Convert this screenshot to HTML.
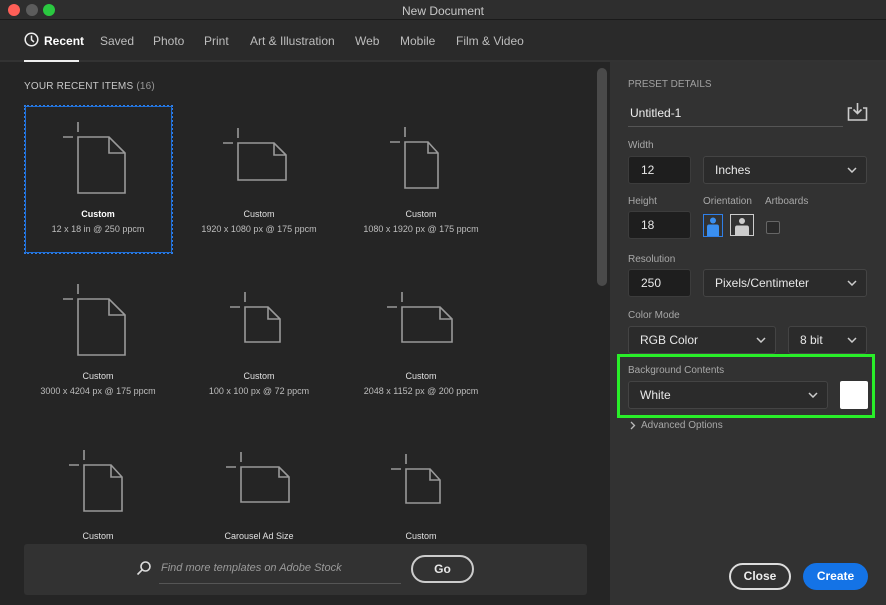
<!DOCTYPE html><html><head><meta charset="utf-8"><style>
*{box-sizing:border-box;margin:0;padding:0}
body{width:886px;height:605px;overflow:hidden;background:#252525;font-family:"Liberation Sans",sans-serif;position:relative;color:#ddd}
.a{position:absolute}
.t{position:absolute;white-space:nowrap}
.lbl{font-size:10px;color:#a8a8a8}
.inp{position:absolute;background:#1e1e1e;border:1px solid #3c3c3c;border-radius:3px;color:#e8e8e8;font-size:12px;padding-left:12px;display:flex;align-items:center}
.dd{position:absolute;background:#2b2b2b;border:1px solid #444;border-radius:3px;color:#e8e8e8;font-size:12px;padding-left:11px;display:flex;align-items:center}
.dd svg{position:absolute;right:9px;top:50%;margin-top:-3px}
.cap{position:absolute;text-align:center;width:160px;font-size:9px;color:#bdbdbd}
.cap b{display:block;font-weight:normal;color:#e0e0e0;margin-bottom:5px}
</style></head><body>
<div class="a" style="left:0;top:0;width:886px;height:20px;background:#2e2e2e;border-bottom:1px solid #1a1a1a"></div>
<div class="a" style="left:8px;top:4px;width:12px;height:12px;border-radius:6px;background:#fe5f57"></div>
<div class="a" style="left:26px;top:4px;width:12px;height:12px;border-radius:6px;background:#5c5c5c"></div>
<div class="a" style="left:43px;top:4px;width:12px;height:12px;border-radius:6px;background:#2ac840"></div>
<div class="t" style="left:0;width:886px;text-align:center;top:4px;font-size:12px;color:#c8c8c8">New Document</div>
<div class="a" style="left:0;top:20px;width:886px;height:42px;background:#2a2a2a;border-bottom:2px solid #333"></div>
<svg class="a" style="left:24px;top:32px" width="15" height="15"><circle cx="7.5" cy="7.5" r="6.3" fill="none" stroke="#eee" stroke-width="1.5"/><path d="M7.5 3.5V7.8L10 10" fill="none" stroke="#eee" stroke-width="1.5"/></svg>
<div class="t" style="left:44px;top:34px;font-size:12px;color:#fff;font-weight:bold">Recent</div>
<div class="a" style="left:24px;top:60px;width:55px;height:2px;background:#eee"></div>
<div class="t" style="top:34px;font-size:12px;color:#bdbdbd;left:100px">Saved</div>
<div class="t" style="top:34px;font-size:12px;color:#bdbdbd;left:153px">Photo</div>
<div class="t" style="top:34px;font-size:12px;color:#bdbdbd;left:204px">Print</div>
<div class="t" style="top:34px;font-size:12px;color:#bdbdbd;left:250px">Art &amp; Illustration</div>
<div class="t" style="top:34px;font-size:12px;color:#bdbdbd;left:355px">Web</div>
<div class="t" style="top:34px;font-size:12px;color:#bdbdbd;left:400px">Mobile</div>
<div class="t" style="top:34px;font-size:12px;color:#bdbdbd;left:456px">Film &amp; Video</div>

<div class="t" style="left:24px;top:81px;font-size:10px;color:#c8c8c8;letter-spacing:.2px">YOUR RECENT ITEMS <span style="color:#999">(16)</span></div>
<div class="a" style="left:24px;top:105px;width:149px;height:149px;border:2px dotted #2f7fe8;outline:1px solid #1f6fd8;outline-offset:-2px"></div>

<svg class="a" style="left:0;top:0" width="600" height="540" fill="none" stroke="#9a9a9a" stroke-width="1.6">
<g id="i"></g>
<path d="M78 122v10M63 137h10M78 137h31l16 16v40H78z M109 137v16h16"/>
<path d="M238 128v10M223 143h10M238 143h36l12 12v25h-48z M274 143v12h12"/>
<path d="M405 127v10M390 142h10M405 142h23l10 11v35h-33z M428 142v11h10"/>
<path d="M78 284v10M63 299h10M78 299h31l16 16v40H78z M109 299v16h16"/>
<path d="M245 292v10M230 307h10M245 307h23l12 12v23h-35z M268 307v12h12"/>
<path d="M402 292v10M387 307h10M402 307h38l12 12v23h-50z M440 307v12h12"/>
<path d="M84 450v10M69 465h10M84 465h27l11 12v34H84z M111 465v12h11"/>
<path d="M241 452v10M226 467h10M241 467h38l10 10v25h-48z M279 467v10h10"/>
<path d="M406 454v10M391 469h10M406 469h24l10 11v23h-34z M430 469v11h10"/>
</svg>
<div class="cap" style="left:18px;top:209px"><b style="font-weight:bold;color:#fff">Custom</b>12 x 18 in @ 250 ppcm</div>
<div class="cap" style="left:179px;top:209px"><b>Custom</b>1920 x 1080 px @ 175 ppcm</div>
<div class="cap" style="left:341px;top:209px"><b>Custom</b>1080 x 1920 px @ 175 ppcm</div>
<div class="cap" style="left:18px;top:371px"><b>Custom</b>3000 x 4204 px @ 175 ppcm</div>
<div class="cap" style="left:179px;top:371px"><b>Custom</b>100 x 100 px @ 72 ppcm</div>
<div class="cap" style="left:341px;top:371px"><b>Custom</b>2048 x 1152 px @ 200 ppcm</div>
<div class="a" style="left:0;top:531px;width:596px;height:11px;overflow:hidden">
<div class="cap" style="left:18px;top:0"><b>Custom</b></div>
<div class="cap" style="left:179px;top:0"><b>Carousel Ad Size</b></div>
<div class="cap" style="left:341px;top:0"><b>Custom</b></div></div>
<div class="a" style="left:597px;top:68px;width:10px;height:218px;border-radius:5px;background:#4a4a4a"></div>

<div class="a" style="left:24px;top:544px;width:563px;height:51px;background:#323232;border-radius:3px"></div>
<svg class="a" style="left:136px;top:560px" width="16" height="16" fill="none" stroke="#ddd" stroke-width="1.6"><circle cx="9.5" cy="6.5" r="4.5"/><path d="M6.3 9.7L1.5 14.5"/></svg>
<div class="t" style="left:161px;top:562px;font-size:11px;font-style:italic;color:#9a9a9a">Find more templates on Adobe Stock</div>
<div class="a" style="left:159px;top:583px;width:242px;height:1px;background:#555"></div>
<div class="a" style="left:411px;top:555px;width:63px;height:28px;border:2px solid #ccc;border-radius:14px;color:#e8e8e8;font-size:12px;font-weight:bold;text-align:center;line-height:24px">Go</div>

<div class="a" style="left:610px;top:62px;width:276px;height:543px;background:#323232"></div>
<div class="t lbl" style="left:628px;top:79px;color:#a0a0a0">PRESET DETAILS</div>
<div class="t" style="left:630px;top:106px;font-size:12px;color:#eee">Untitled-1</div>
<div class="a" style="left:628px;top:126px;width:215px;height:1px;background:#555"></div>
<svg class="a" style="left:847px;top:102px" width="21" height="20" fill="none" stroke="#ccc" stroke-width="1.6"><path d="M5 6H1.5v12h18V6H16"/><path d="M10.5 1v10M6.5 7.5l4 4 4-4"/></svg>
<div class="t lbl" style="left:628px;top:140px">Width</div>
<div class="inp" style="left:628px;top:156px;width:63px;height:28px">12</div>
<div class="dd" style="left:703px;top:156px;width:164px;height:28px">Inches<svg width="10" height="6"><path d="M1 1l4 4 4-4" fill="none" stroke="#ccc" stroke-width="1.5"/></svg></div>
<div class="t lbl" style="left:628px;top:196px">Height</div>
<div class="t lbl" style="left:703px;top:196px">Orientation</div>
<div class="t lbl" style="left:765px;top:196px">Artboards</div>
<div class="inp" style="left:628px;top:211px;width:63px;height:28px">18</div>
<svg class="a" style="left:703px;top:214px" width="52" height="24"><rect x=".5" y=".5" width="19" height="22" fill="none" stroke="#2f7fe8"/><circle cx="10" cy="6.5" r="3" fill="#3a8ff0"/><path d="M4 22V13q0-2.5 2-2.5h8q2 0 2 2.5v9z" fill="#3a8ff0"/><rect x="27.5" y=".5" width="23" height="21" fill="none" stroke="#ccc"/><circle cx="39" cy="7" r="3" fill="#ccc"/><path d="M32 21v-7q0-2.5 2-2.5h10q2 0 2 2.5v7z" fill="#ccc"/></svg>
<div class="a" style="left:766px;top:221px;width:14px;height:13px;border:1px solid #666;border-radius:2px;background:#2a2a2a"></div>
<div class="t lbl" style="left:628px;top:254px">Resolution</div>
<div class="inp" style="left:628px;top:269px;width:63px;height:28px">250</div>
<div class="dd" style="left:703px;top:269px;width:164px;height:28px">Pixels/Centimeter<svg width="10" height="6"><path d="M1 1l4 4 4-4" fill="none" stroke="#ccc" stroke-width="1.5"/></svg></div>
<div class="t lbl" style="left:628px;top:310px">Color Mode</div>
<div class="dd" style="left:628px;top:326px;width:148px;height:28px">RGB Color<svg width="10" height="6"><path d="M1 1l4 4 4-4" fill="none" stroke="#ccc" stroke-width="1.5"/></svg></div>
<div class="dd" style="left:788px;top:326px;width:79px;height:28px">8 bit<svg width="10" height="6"><path d="M1 1l4 4 4-4" fill="none" stroke="#ccc" stroke-width="1.5"/></svg></div>
<div class="a" style="left:617px;top:354px;width:258px;height:64px;border:3px solid #29ee29"></div>
<div class="t lbl" style="left:628px;top:365px">Background Contents</div>
<div class="dd" style="left:628px;top:381px;width:200px;height:28px">White<svg width="10" height="6"><path d="M1 1l4 4 4-4" fill="none" stroke="#ccc" stroke-width="1.5"/></svg></div>
<div class="a" style="left:840px;top:381px;width:28px;height:28px;background:#fff;border-radius:2px"></div>
<svg class="a" style="left:630px;top:421px" width="6" height="9"><path d="M1 1l3.5 3.5L1 8" fill="none" stroke="#bbb" stroke-width="1.3"/></svg>
<div class="t lbl" style="left:641px;top:420px">Advanced Options</div>

<div class="a" style="left:729px;top:563px;width:62px;height:27px;border:2px solid #ddd;border-radius:14px;color:#eee;font-size:12px;font-weight:bold;text-align:center;line-height:23px">Close</div>
<div class="a" style="left:803px;top:563px;width:65px;height:27px;background:#1473e6;border-radius:14px;color:#fff;font-size:12px;font-weight:bold;text-align:center;line-height:27px">Create</div>
</body></html>
